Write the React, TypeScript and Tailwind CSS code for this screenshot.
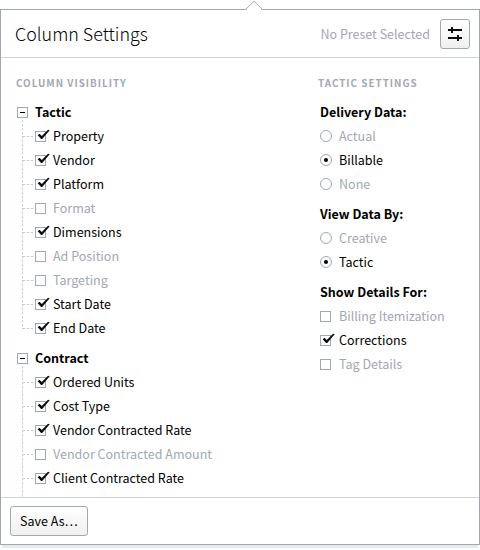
import React from "react";

const LINE = "#c6cecf";

function Check() {
  return (
    <svg className="absolute left-[1px] -top-[3px]" width="14" height="12" viewBox="0 0 14 12">
      <path d="M.7 6.3L2.5 4.8L4.8 6.9L11 .8L12.7 1.3L5.2 9.9L4.1 9.9z" fill="#0c0c0c" />
    </svg>
  );
}

function Box({ on }: { on?: boolean }) {
  return (
    <span className="relative block h-[11px] w-[11px] shrink-0 border border-[#9eaab0] bg-white">
      {on && <Check />}
    </span>
  );
}

function Radio({ on }: { on?: boolean }) {
  return (
    <span className="flex h-3 w-3 shrink-0 items-center justify-center rounded-full border border-[#9eaab0]">
      {on && <span className="h-1 w-1 rounded-full bg-black" />}
    </span>
  );
}

function TreeRow({ label, on, last }: { label: string; on?: boolean; last?: boolean }) {
  return (
    <div className="flex h-6">
      <svg className="-mt-[6px] shrink-0" width="13" height="30" stroke={LINE} strokeDasharray="2.5 1.5" fill="none">
        <path d={last ? "M.5 6V19" : "M.5 2V30"} />
        <path d="M1 18.5H12" />
      </svg>
      <div className="flex h-[25px] items-center">
        <Box on={on} />
        <span className={`ml-[7px] self-start whitespace-nowrap leading-6 ${on ? "text-black" : "text-[#9eaab0]"}`}>{label}</span>
      </div>
    </div>
  );
}

function Group({ title, items }: { title: string; items: [string, boolean][] }) {
  return (
    <div className="mb-[6px]">
      <div className="flex h-6 items-center">
        <span className="mt-px flex h-[11px] w-[11px] items-center justify-center border border-[#9eaab0]">
          <span className="h-px w-[5px] bg-black" />
        </span>
        <span className="ml-[7px] font-bold leading-6">{title}</span>
      </div>
      <div className="ml-[5px]">
        {items.map(([label, on], i) => (
          <TreeRow key={label} label={label} on={on} last={i === items.length - 1} />
        ))}
      </div>
    </div>
  );
}

function Options({ title, kind, items }: { title: string; kind: "radio" | "check"; items: [string, boolean][] }) {
  return (
    <div className="mb-[6px]">
      <div className="h-6 font-bold leading-6">{title}</div>
      {items.map(([label, on]) => (
        <div key={label} className="flex h-6 items-center">
          <span className={`w-[19px] shrink-0 ${kind === "check" ? "pt-px" : ""}`}>
            {kind === "radio" ? <Radio on={on} /> : <Box on={on} />}
          </span>
          <span className={`whitespace-nowrap leading-6 ${on ? "text-black" : "text-[#9eaab0]"}`}>{label}</span>
        </div>
      ))}
    </div>
  );
}

export default function App() {
  return (
    <div className="relative h-[550px] w-[480px] overflow-hidden bg-white pt-[9px] font-['Noto_Sans_CJK_SC','Noto_Sans',sans-serif] text-[12.53px] text-black">
      <div className="flex h-[536px] flex-col border border-[#9eaab0] bg-white shadow-[0_5px_1px_-2px_#e8ebeb]">
        <header className="flex h-12 shrink-0 items-center border-b border-[#cfd5d5] pl-[14px] pr-[9px]">
          <h1 className="-mt-[2px] flex-1 text-[17.9px] font-light leading-6">Column Settings</h1>
          <span className="mr-[10px] leading-6 text-[#9eaab0]">No Preset Selected</span>
          <button className="flex h-[30px] w-[30px] items-center justify-center rounded-[3px] border border-[#9eaab0] bg-gradient-to-b from-white to-[#f0f0f0]">
            <svg width="14" height="14" viewBox="0 0 14 14" fill="#0c0c0c">
              <path d="M0 2h14v2H0zM3 0h2v6H3zM0 10h14v2H0zM9 8h2v6H9z" />
            </svg>
          </button>
        </header>
        <main className="flex min-h-0 flex-1 overflow-hidden">
          <section className="w-[302px] shrink-0 pl-4 pt-[17px]">
            <h2 className="-ml-px mb-[9px] h-4 text-[9.85px] font-bold leading-4 tracking-[1px] text-[#9eaab0]">COLUMN VISIBILITY</h2>
            <Group
              title="Tactic"
              items={[
                ["Property", true],
                ["Vendor", true],
                ["Platform", true],
                ["Format", false],
                ["Dimensions", true],
                ["Ad Position", false],
                ["Targeting", false],
                ["Start Date", true],
                ["End Date", true],
              ]}
            />
            <Group
              title="Contract"
              items={[
                ["Ordered Units", true],
                ["Cost Type", true],
                ["Vendor Contracted Rate", true],
                ["Vendor Contracted Amount", false],
                ["Client Contracted Rate", true],
                ["Client Contracted Amount", false],
              ]}
            />
          </section>
          <section className="flex-1 pl-[17px] pt-[17px]">
            <h2 className="-ml-[2px] mb-[9px] h-4 text-[9.85px] font-bold leading-4 tracking-[1px] text-[#9eaab0]">TACTIC SETTINGS</h2>
            <Options title="Delivery Data:" kind="radio" items={[["Actual", false], ["Billable", true], ["None", false]]} />
            <Options title="View Data By:" kind="radio" items={[["Creative", false], ["Tactic", true]]} />
            <Options title="Show Details For:" kind="check" items={[["Billing Itemization", false], ["Corrections", true], ["Tag Details", false]]} />
          </section>
        </main>
        <footer className="flex h-[47px] shrink-0 items-center border-t border-[#cfd5d5] pl-[9px]">
          <button className="h-[30px] w-[78px] rounded-[3px] border border-[#9eaab0] bg-gradient-to-b from-white to-[#f0f0f0] leading-7">
            Save As…
          </button>
        </footer>
      </div>
      <svg className="absolute left-[245px] top-0" width="18" height="10" viewBox="0 0 18 10">
        <path d="M1 10L9 1.2L17 10z" fill="#fff" />
        <path d="M0.5 9.5L9 1.2L17.5 9.5" fill="none" stroke="#9eaab0" />
      </svg>
    </div>
  );
}
